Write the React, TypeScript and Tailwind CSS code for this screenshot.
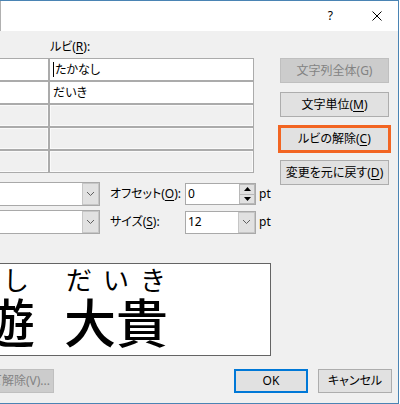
import React from "react";

function Chevron() {
  return (
    <svg width="9" height="6" viewBox="0 0 9 6">
      <path d="M1 1 L4.5 4.5 L8 1" fill="none" stroke="#606060" strokeWidth="1" />
    </svg>
  );
}

function Combo({ className, children }: { className: string; children?: React.ReactNode }) {
  return (
    <div className={"flex border border-[#a9a9a9] bg-white " + className}>
      <div className="flex-1 flex items-center pl-[2px] overflow-hidden">{children}</div>
      <div className="w-[17px] flex items-center justify-center bg-[#e1e1e1] border border-[#c6c6c6]">
        <Chevron />
      </div>
    </div>
  );
}

function Spin() {
  return (
    <div className="w-[71px] h-[22px] border border-[#a9a9a9] bg-white flex">
      <div className="flex-1 flex items-center pl-[2px]">0</div>
      <div className="w-[16px] flex flex-col">
        <div className="flex-1 bg-[#e1e1e1] border border-[#b8b8b8] flex items-center justify-center">
          <svg width="7" height="4" viewBox="0 0 7 4">
            <path d="M3.5 0 L7 4 L0 4 Z" fill="#000" />
          </svg>
        </div>
        <div className="flex-1 bg-[#e1e1e1] border border-t-0 border-[#b8b8b8] flex items-center justify-center">
          <svg width="7" height="4" viewBox="0 0 7 4">
            <path d="M0 0 L7 0 L3.5 4 Z" fill="#000" />
          </svg>
        </div>
      </div>
    </div>
  );
}

function Btn({ children, disabled }: { children: React.ReactNode; disabled?: boolean }) {
  return (
    <div
      className={
        disabled
          ? "h-[25px] w-full flex items-center justify-center whitespace-nowrap bg-[#cccccc] border border-[#bfbfbf] text-[#838383]"
          : "h-[25px] w-full flex items-center justify-center whitespace-nowrap bg-[#e1e1e1] border border-[#adadad] text-black"
      }
    >
      {children}
    </div>
  );
}

function Row({ text, caret, enabled }: { text?: string; caret?: boolean; enabled: boolean }) {
  const cell = enabled
    ? "h-[23px] border border-[#ababab] bg-white"
    : "h-[23px] border border-[#ababab] bg-[#f0f0f0] shadow-[inset_0_0_0_1px_#fafafa]";
  return (
    <div className="flex">
      <div className={"w-[60px] -ml-[11px] " + cell} />
      <div className={"w-[205px] flex items-center pl-[3px] " + cell}>
        {caret && <span className="w-px h-[15px] bg-black mr-[1px]" />}
        {text}
      </div>
    </div>
  );
}

export default function App() {
  return (
    <div className="w-[399px] h-[404px] overflow-hidden bg-[#f0f0f0] border-t border-r border-b border-[#4a84b4] font-['Noto_Sans','Noto_Sans_CJK_JP',sans-serif] [font-feature-settings:'palt'] text-[12px] leading-[16px] text-black">
      <div className="h-[30px] bg-white border-l border-[#b0b0b0] flex items-center justify-end">
        <span className="text-[12px] leading-none mr-[39px]">?</span>
        <svg width="10" height="10" viewBox="0 0 10 10" className="mr-[16px]">
          <path d="M0.5 0.5 L9.5 9.5 M9.5 0.5 L0.5 9.5" stroke="#000" strokeWidth="1" fill="none" />
        </svg>
      </div>

      <div className="flex">
        <div className="w-[280px] flex flex-col">
          <div className="h-[27px] pl-[50px] pt-[8px] whitespace-nowrap">
            ルビ(<span className="underline underline-offset-2">R</span>):
          </div>
          <div className="flex flex-col">
            <Row text="たかなし" caret enabled />
            <Row text="だいき" enabled />
            <Row enabled={false} />
            <Row enabled={false} />
            <Row enabled={false} />
          </div>

          <div className="mt-[9px] flex items-center h-[24px]">
            <Combo className="w-[150px] h-[24px] -ml-[50px]" />
            <div className="w-[75px] ml-[10px] whitespace-nowrap">
              オフセット(<span className="underline underline-offset-2">O</span>):
            </div>
            <Spin />
            <span className="ml-[3px]">pt</span>
          </div>
          <div className="mt-[4px] flex items-center h-[24px]">
            <Combo className="w-[150px] h-[24px] -ml-[50px]" />
            <div className="w-[75px] ml-[10px] whitespace-nowrap">
              サイズ(<span className="underline underline-offset-2">S</span>):
            </div>
            <Combo className="w-[71px] h-[23px]">12</Combo>
            <span className="ml-[3px]">pt</span>
          </div>

          <div className="h-[93px] w-[291px] -ml-[20px] mt-[29px] border border-[#646464] bg-white overflow-hidden pt-[1px] font-['Noto_Sans_CJK_JP',sans-serif] [font-feature-settings:normal]">
            <div className="flex h-[28px] text-[26px] leading-[28px]">
              <span className="ml-[22px] w-[26px]">し</span>
              <span className="ml-[37px] w-[100px] flex justify-between">
                <span>だ</span>
                <span>い</span>
                <span>き</span>
              </span>
            </div>
            <div className="flex h-[56px] text-[52px] leading-[56px] font-medium">
              <span className="ml-[2px]">遊</span>
              <span className="ml-[29px]">大</span>
              <span>貴</span>
            </div>
          </div>
        </div>

        <div className="w-[109px] flex flex-col gap-[9px] pt-[27px]">
          <Btn disabled>文字列全体(G)</Btn>
          <Btn>
            文字単位(<span className="underline underline-offset-2">M</span>)
          </Btn>
          <div className="relative">
            <Btn>
              ルビの解除(<span className="underline underline-offset-2">C</span>)
            </Btn>
            <div className="absolute -left-[2px] -right-[2px] -top-[1px] -bottom-[2px] border-[3px] border-[#f26522]" />
          </div>
          <Btn>
            変更を元に戻す(<span className="underline underline-offset-2">D</span>)
          </Btn>
        </div>
      </div>

      <div className="mt-[13px] flex h-[24px]">
        <div className="w-[114px] -ml-[60px] h-[24px] flex items-center justify-end pr-[3px] bg-[#cccccc] border border-[#bfbfbf] text-[#838383] whitespace-nowrap overflow-hidden">
          すべて解除(V)...
        </div>
        <div className="ml-[180px] w-[74px] h-[24px] flex items-center justify-center bg-[#e1e1e1] border-2 border-[#0078d7]">
          OK
        </div>
        <div className="ml-[10px] w-[74px] h-[24px] flex items-center justify-center bg-[#e1e1e1] border border-[#adadad]">
          キャンセル
        </div>
      </div>
    </div>
  );
}
